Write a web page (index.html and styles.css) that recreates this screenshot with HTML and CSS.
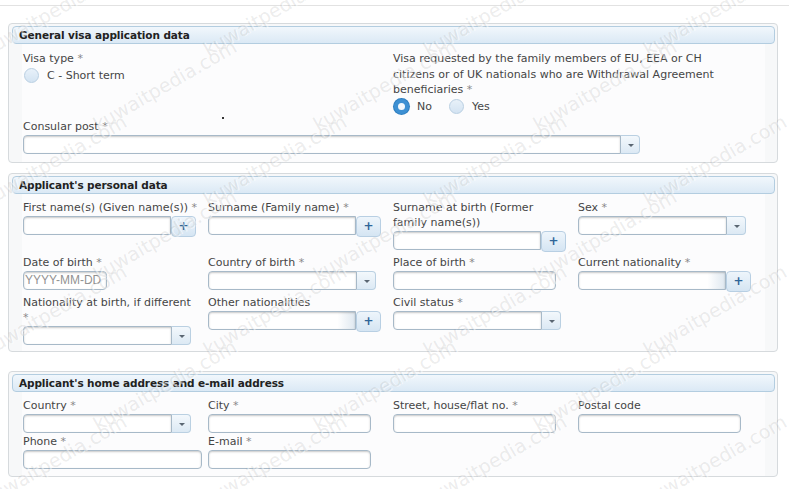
FILE: index.html
```html
<!DOCTYPE html>
<html lang="en">
<head>
    <meta charset="UTF-8">
    <title>Visa application - general data</title>
    <link rel="stylesheet" href="styles.css">
</head>
<body>
    <div class="topline"></div>

    <div class="panel">
        <div class="panel-head">General visa application data</div>
        <div class="panel-body first">
            <div class="grid">
                <div class="field">
                    <label>Visa type <span class="req">*</span></label>
                    <div class="radios">
                        <span class="radio"></span><span class="opt">C - Short term</span>
                    </div>
                </div>
                <div class="field family">
                    <label>Visa requested by the family members of EU, EEA or CH citizens or of UK nationals who are Withdrawal Agreement beneficiaries <span class="req">*</span></label>
                    <div class="radios">
                        <span class="radio on"></span><span class="opt">No</span>
                        <span class="radio"></span><span class="opt">Yes</span>
                    </div>
                </div>
            </div>
            <span class="dot"></span>
            <div class="field consular">
                <label>Consular post <span class="req">*</span></label>
                <div class="select wide"><div class="box"></div><span class="arrow"></span></div>
            </div>
        </div>
    </div>

    <div class="panel second">
        <div class="panel-head">Applicant's personal data</div>
        <div class="panel-body">
            <div class="grid rows">
                <div class="field">
                    <label>First name(s) (Given name(s)) <span class="req">*</span></label>
                    <div class="group"><div class="box"></div><span class="plus">+</span></div>
                </div>
                <div class="field">
                    <label>Surname (Family name) <span class="req">*</span></label>
                    <div class="group"><div class="box"></div><span class="plus">+</span></div>
                </div>
                <div class="field">
                    <label>Surname at birth (Former family name(s))</label>
                    <div class="group"><div class="box"></div><span class="plus">+</span></div>
                </div>
                <div class="field">
                    <label>Sex <span class="req">*</span></label>
                    <div class="select"><div class="box"></div><span class="arrow"></span></div>
                </div>

                <div class="field">
                    <label>Date of birth <span class="req">*</span></label>
                    <div class="input date">YYYY-MM-DD</div>
                </div>
                <div class="field">
                    <label>Country of birth <span class="req">*</span></label>
                    <div class="select"><div class="box"></div><span class="arrow"></span></div>
                </div>
                <div class="field">
                    <label>Place of birth <span class="req">*</span></label>
                    <div class="input"></div>
                </div>
                <div class="field">
                    <label>Current nationality <span class="req">*</span></label>
                    <div class="group multi"><div class="box"></div><span class="plus">+</span></div>
                </div>

                <div class="field">
                    <label>Nationality at birth, if different <span class="req">*</span></label>
                    <div class="select"><div class="box"></div><span class="arrow"></span></div>
                </div>
                <div class="field">
                    <label>Other nationalities</label>
                    <div class="group multi"><div class="box"></div><span class="plus">+</span></div>
                </div>
                <div class="field">
                    <label>Civil status <span class="req">*</span></label>
                    <div class="select"><div class="box"></div><span class="arrow"></span></div>
                </div>
            </div>
        </div>
    </div>

    <div class="panel third">
        <div class="panel-head">Applicant's home address and e-mail address</div>
        <div class="panel-body">
            <div class="grid tight">
                <div class="field">
                    <label>Country <span class="req">*</span></label>
                    <div class="select"><div class="box"></div><span class="arrow"></span></div>
                </div>
                <div class="field">
                    <label>City <span class="req">*</span></label>
                    <div class="input"></div>
                </div>
                <div class="field">
                    <label>Street, house/flat no. <span class="req">*</span></label>
                    <div class="input"></div>
                </div>
                <div class="field">
                    <label>Postal code</label>
                    <div class="input"></div>
                </div>
                <div class="field">
                    <label>Phone <span class="req">*</span></label>
                    <div class="input long"></div>
                </div>
                <div class="field">
                    <label>E-mail <span class="req">*</span></label>
                    <div class="input"></div>
                </div>
            </div>
        </div>
    </div>

    <div class="watermark">
        <span style="left:-26px;top:-1px">kuwaitpedia.com</span>
        <span style="left:194px;top:-1px">kuwaitpedia.com</span>
        <span style="left:414px;top:-1px">kuwaitpedia.com</span>
        <span style="left:634px;top:-1px">kuwaitpedia.com</span>
        <span style="left:84px;top:74px">kuwaitpedia.com</span>
        <span style="left:304px;top:74px">kuwaitpedia.com</span>
        <span style="left:524px;top:74px">kuwaitpedia.com</span>
        <span style="left:-26px;top:149px">kuwaitpedia.com</span>
        <span style="left:194px;top:149px">kuwaitpedia.com</span>
        <span style="left:414px;top:149px">kuwaitpedia.com</span>
        <span style="left:634px;top:149px">kuwaitpedia.com</span>
        <span style="left:84px;top:224px">kuwaitpedia.com</span>
        <span style="left:304px;top:224px">kuwaitpedia.com</span>
        <span style="left:524px;top:224px">kuwaitpedia.com</span>
        <span style="left:-26px;top:299px">kuwaitpedia.com</span>
        <span style="left:194px;top:299px">kuwaitpedia.com</span>
        <span style="left:414px;top:299px">kuwaitpedia.com</span>
        <span style="left:634px;top:299px">kuwaitpedia.com</span>
        <span style="left:84px;top:374px">kuwaitpedia.com</span>
        <span style="left:304px;top:374px">kuwaitpedia.com</span>
        <span style="left:524px;top:374px">kuwaitpedia.com</span>
        <span style="left:-26px;top:449px">kuwaitpedia.com</span>
        <span style="left:194px;top:449px">kuwaitpedia.com</span>
        <span style="left:414px;top:449px">kuwaitpedia.com</span>
        <span style="left:634px;top:449px">kuwaitpedia.com</span>
    </div>
</body>
</html>
```

FILE: styles.css
```css
body {
    margin: 0;
    background: #fff;
    font-family: 'DejaVu Sans', Verdana, sans-serif;
    font-size: 11px;
    color: #454545;
    position: relative;
    height: 489px;
    overflow: hidden;
}
.topline {
    height: 1px;
    background: #e2e2e2;
    margin-top: 5px;
}
.panel {
    margin: 17px 0 0 8px;
    width: 770px;
    box-sizing: border-box;
    border: 1px solid #d6dadd;
    border-radius: 4px;
    background: #f7f8f9;
    padding: 2px 2px 0 3px;
}
.panel.second {
    margin-top: 10px;
}
.panel.third {
    margin-top: 19px;
}
.panel-head {
    height: 18px;
    box-sizing: border-box;
    border: 1px solid #b3cde0;
    border-radius: 4px;
    background: linear-gradient(#f1f7fc, #dbe9f5);
    padding-left: 6px;
    line-height: 16px;
    font-weight: bold;
    font-size: 10.5px;
    letter-spacing: -0.1px;
    color: #222;
}
.panel-body {
    position: relative;
    margin: 0 10px 0 10px;
    padding: 6px 0 6px 1px;
    background: #fcfcfd;
}
.panel-body.first {
    padding-top: 7px;
    padding-bottom: 8px;
}
.panel.third .panel-body {
    padding-bottom: 7px;
}
.grid {
    display: grid;
    grid-template-columns: repeat(4, 185px);
}
.grid.rows {
    row-gap: 3px;
}
.grid.tight {
    row-gap: 1px;
}
.field label {
    display: block;
    max-width: 175px;
    line-height: 15px;
    margin-bottom: 1px;
}
.req {
    color: #888;
}
.family {
    grid-column: 3 / span 2;
    width: 345px;
}
.family label {
    max-width: none;
    line-height: 15.5px;
}
.radios {
    display: flex;
    align-items: center;
    height: 16px;
    margin-top: 1px;
}
.radio {
    width: 15px;
    height: 15px;
    box-sizing: border-box;
    border-radius: 50%;
    border: 1px solid #b9cfe2;
    background: linear-gradient(#e8f1f9, #d3e3f2);
    margin-right: 8px;
    margin-left: 1px;
}
.radio.on {
    border: 4px solid #3d90d3;
    background: #f2f8fd;
    box-shadow: 0 0 0 1px #2f7fc0;
}
.opt {
    margin-right: 16px;
}
.dot {
    position: absolute;
    left: 200px;
    top: 73px;
    width: 2px;
    height: 2px;
    background: #333;
}
.consular {
    margin-top: 4px;
}
.box, .input {
    height: 19px;
    box-sizing: border-box;
    border: 1px solid #a7b9c8;
    border-radius: 4px;
    background: #fff;
    box-shadow: inset 0 1px 2px rgba(0, 0, 0, 0.22);
}
.input {
    width: 163px;
}
.input.long {
    width: 179px;
}
.input.date {
    width: 84px;
    color: #929292;
    font-family: 'Liberation Sans', Arial, sans-serif;
    font-size: 12px;
    line-height: 17px;
    padding-left: 1px;
    white-space: nowrap;
    overflow: hidden;
}
.select, .group {
    display: flex;
    align-items: flex-start;
}
.select .box {
    width: 149px;
    border-radius: 4px 0 0 4px;
}
.select.wide .box {
    width: 598px;
}
.arrow {
    width: 19px;
    height: 19px;
    box-sizing: border-box;
    border: 1px solid #bad0e2;
    border-left: none;
    border-radius: 0 4px 4px 0;
    background: linear-gradient(#f3f8fc, #dce9f4);
    position: relative;
}
.arrow::after {
    content: "";
    position: absolute;
    left: 7px;
    top: 8px;
    border-left: 3px solid transparent;
    border-right: 3px solid transparent;
    border-top: 3px solid #5a6672;
}
.group .box {
    width: 148px;
    border-radius: 4px 0 0 4px;
}
.group.multi .box {
    background: linear-gradient(to right, #fff 88%, #dfe8f0);
}
.plus {
    width: 25px;
    height: 21px;
    box-sizing: border-box;
    border: 1px solid #b8cfe3;
    border-radius: 4px;
    background: linear-gradient(#eef5fb, #d5e5f3);
    color: #2f6598;
    font-weight: bold;
    font-size: 12px;
    text-align: center;
    line-height: 19px;
}
.watermark {
    position: absolute;
    left: 0;
    top: 0;
    width: 789px;
    height: 489px;
    pointer-events: none;
}
.watermark span {
    position: absolute;
    font-size: 19px;
    white-space: nowrap;
    color: rgba(120, 120, 120, 0.15);
    text-shadow: 1px 1px 0 rgba(255, 255, 255, 0.5);
    transform: rotate(-30deg);
}
```
